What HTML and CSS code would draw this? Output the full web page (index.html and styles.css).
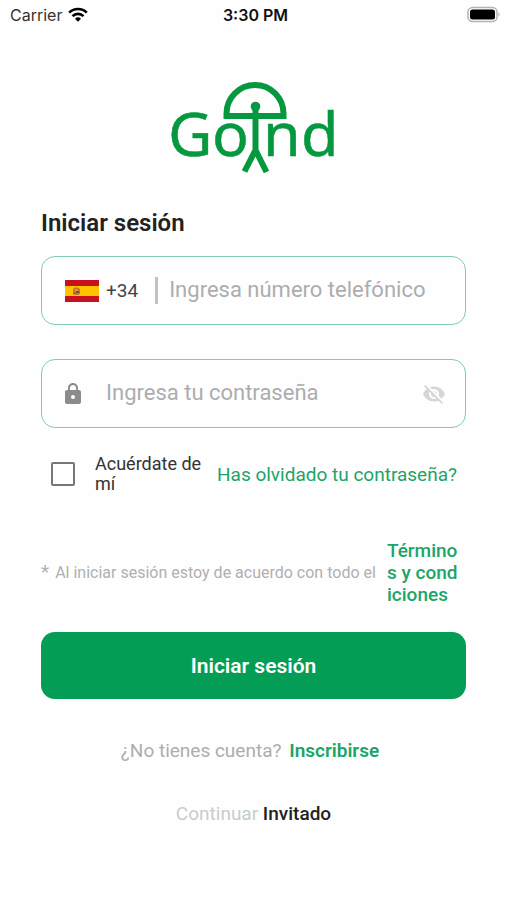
FILE: index.html
```html
<!DOCTYPE html>
<html lang="es">
<head>
<meta charset="utf-8">
<meta name="viewport" content="width=device-width, initial-scale=1">
<title>Iniciar sesión</title>
<link rel="stylesheet" href="styles.css">
</head>
<body>
<header class="status">
  <div class="status-side">
    <span>Carrier</span>
    <svg class="wifi" viewBox="0 0 20 15" aria-hidden="true">
      <path d="M1.2 5.6a12.6 12.6 0 0 1 17.6 0" fill="none" stroke="#000" stroke-width="2.7"/>
      <path d="M4.5 9.1a7.9 7.9 0 0 1 11 0" fill="none" stroke="#000" stroke-width="2.6"/>
      <path d="M10 14.8l-3-3.1a4.3 4.3 0 0 1 6 0z"/>
    </svg>
  </div>
  <time class="clock">3:30 PM</time>
  <div class="status-side status-end">
    <svg class="battery" viewBox="0 0 34 18" aria-hidden="true">
      <rect x="1" y="1.5" width="29" height="14" rx="4.5" fill="#fff" stroke="#b4b4b4" stroke-width="1.5"/>
      <rect x="3" y="3.5" width="25" height="10" rx="2.5"/>
      <path d="M31.5 6.5v4a2.3 2.3 0 0 0 0-4z" fill="#b4b4b4"/>
    </svg>
  </div>
</header>
<main class="page">
  <svg class="logo" viewBox="-1 0 190 115" role="img" aria-label="Goind">
    <text class="logo-text" x="8 52" y="86">Go</text>
    <text class="logo-text" x="103 141" y="86">nd</text>
    <g fill="none" stroke="#06983f" stroke-width="6">
      <path d="M66.5 46V43.5a28.5 28.5 0 0 1 57 0V46z"/>
      <path d="M95.5 38v43M96 79L84.500 101.500M95 79L106.500 102"/>
    </g>
    <circle cx="95.500" cy="36.500" r="4.800" fill="#06983f"/>
  </svg>
  <h1 class="title">Iniciar sesión</h1>
  <form class="form">
    <div class="field">
      <svg class="flag" viewBox="0 0 34 22" aria-hidden="true">
        <path fill="#c9101f" d="M0 0h34v22H0z"/>
        <path fill="#ffc400" d="M0 6h34v10H0z"/>
        <path fill="#c8742a" d="M8 9l2-1.500h3L15 9v5l-2 1h-3l-2-1z"/>
        <path fill="#e0b03c" d="M10.500 9h2v2h-2z"/>
        <path fill="#74503a" d="M11 11h3v2h-3zM8 13h2v1H8z"/>
      </svg>
      <span class="prefix">+34</span>
      <span class="divider"></span>
      <input class="input" type="tel" aria-label="Número telefónico" placeholder="Ingresa número telefónico">
    </div>
    <div class="field">
      <svg class="lock" viewBox="0 0 24 24" aria-hidden="true">
        <path d="M18 8h-1V6c0-2.760-2.240-5-5-5S7 3.240 7 6v2H6c-1.100 0-2 .9-2 2v10c0 1.100.9 2 2 2h12c1.100 0 2-.9 2-2V10c0-1.100-.9-2-2-2zm-6 9c-1.100 0-2-.9-2-2s.9-2 2-2 2 .9 2 2-.9 2-2 2zm3.100-9H8.900V6c0-1.710 1.390-3.100 3.100-3.100s3.100 1.390 3.100 3.100v2z"/>
      </svg>
      <input class="input" type="password" aria-label="Contraseña" placeholder="Ingresa tu contraseña">
      <button class="reveal" type="button" aria-label="Mostrar contraseña">
        <svg viewBox="0 0 24 24" aria-hidden="true">
          <path d="M12 7c2.760 0 5 2.240 5 5 0 .65-.13 1.260-.36 1.830l2.920 2.920c1.510-1.260 2.700-2.890 3.430-4.750-1.730-4.390-6-7.500-11-7.500-1.400 0-2.740.25-3.980.7l2.160 2.160C10.740 7.130 11.350 7 12 7zM2 4.270l2.280 2.280.46.46C3.080 8.300 1.780 10.020 1 12c1.730 4.390 6 7.500 11 7.500 1.550 0 3.030-.3 4.380-.84l.42.42L19.730 22 21 20.730 3.270 3 2 4.270zM7.530 9.800l1.550 1.550c-.05.21-.08.43-.08.65 0 1.660 1.340 3 3 3 .22 0 .44-.03.65-.08l1.550 1.550c-.67.33-1.410.53-2.200.53-2.760 0-5-2.240-5-5 0-.79.2-1.530.53-2.200zm4.310-.78l3.150 3.150.02-.16c0-1.660-1.340-3-3-3l-.17.01z"/>
        </svg>
      </button>
    </div>
    <div class="options">
      <input class="check" type="checkbox" id="remember">
      <label class="remember" for="remember">Acuérdate de mí</label>
      <a class="link" href="#">Has olvidado tu contraseña?</a>
    </div>
    <div class="terms">
      <span class="terms-text"><span class="star">*</span> Al iniciar sesión estoy de acuerdo con todo el</span>
      <a class="terms-link" href="#">Términos y condiciones</a>
    </div>
    <button class="submit" type="submit">Iniciar sesión</button>
  </form>
  <p class="line signup">¿No tienes cuenta? <a class="strong-link" href="#">Inscribirse</a></p>
  <p class="line guest">Continuar <a class="guest-link" href="#">Invitado</a></p>
</main>
</body>
</html>
```
FILE: styles.css
```css
* { box-sizing: border-box; }
body {
  margin: 0;
  background: #fefefe;
  color: #222;
  font-family: Roboto, "Liberation Sans", sans-serif;
}
a { text-decoration: none; }
.status {
  display: flex;
  align-items: center;
  height: 29px;
  padding: 0 6px 0 10px;
  font-family: Inter, sans-serif;
  font-size: 16px;
  color: #333;
}
.status-side { flex: 1; display: flex; align-items: center; gap: 6px; }
.status-end { justify-content: flex-end; }
.clock { font-weight: 600; color: #111; }
.wifi { width: 20px; height: 15px; }
.battery { width: 34px; height: 18px; }
.page {
  display: flex;
  flex-direction: column;
  padding: 41px 41px 0;
}
.logo { width: 190px; height: 115px; align-self: center; }
.logo-text {
  font-family: "Noto Sans", sans-serif;
  font-size: 61px;
  fill: #06983f;
  stroke: #06983f;
  stroke-width: 0.5px;
}
.title { margin: 24px 0 19px; font-size: 24px; line-height: 28px; font-weight: 600; }
.form { display: flex; flex-direction: column; }
.field {
  display: flex;
  align-items: center;
  height: 69px;
  padding: 0 19px 0 23px;
  border: 1px solid #7fcbae;
  border-radius: 14px;
}
.field + .field { margin-top: 34px; }
.flag { width: 34px; height: 22px; }
.prefix { margin-left: 7px; font-size: 19px; color: #444; }
.divider { width: 3px; height: 27px; margin: 0 11px 0 17px; background: #c2c2c2; }
.input {
  flex: 1;
  min-width: 0;
  padding: 0 0 3px;
  border: 0;
  outline: 0;
  background: none;
  font: inherit;
  font-size: 22px;
  color: #222;
}
.input::placeholder { color: #adadad; opacity: 1; }
.lock { width: 24px; height: 24px; margin: 0 21px 0 -4px; fill: #8c8c8c; }
.reveal { display: flex; padding: 0; border: 0; background: none; }
.reveal svg { width: 24px; height: 24px; fill: #d6d6d6; }
.options {
  display: flex;
  align-items: center;
  margin-top: 26px;
  padding-left: 10px;
}
.check {
  appearance: none;
  flex: none;
  width: 24px;
  height: 24px;
  margin: 0 20px 0 0;
  border: 2px solid #777;
  border-radius: 2px;
}
.check:checked { background: #039d55; }
.remember { width: 112px; margin-right: 10px; font-size: 18px; line-height: 20px; color: #333; }
.link { font-size: 19px; color: #1ba567; white-space: nowrap; }
.terms { display: flex; align-items: center; justify-content: space-between; margin-top: 46px; }
.terms-text { font-size: 16px; line-height: 20px; color: #b0b0b0; white-space: nowrap; }
.star { margin-right: 2px; font-size: 19px; line-height: 16px; }
.terms-link {
  width: 79px;
  padding-right: 7px;
  font-size: 19px;
  line-height: 22px;
  font-weight: 500;
  color: #1ba567;
  word-break: break-all;
}
.submit {
  height: 67px;
  margin-top: 26px;
  border: 0;
  border-radius: 14px;
  background: #039d55;
  color: #fff;
  font: inherit;
  font-size: 21px;
  font-weight: 600;
}
.line { margin: 0; text-align: center; font-size: 19px; line-height: 24px; }
.signup { margin-top: 40px; padding-right: 7px; color: #adadad; }
.strong-link { margin-left: 3px; color: #1ba567; font-weight: 600; }
.guest { margin-top: 39px; color: #c8cccc; }
.guest-link { color: #222; font-weight: 500; }
```
